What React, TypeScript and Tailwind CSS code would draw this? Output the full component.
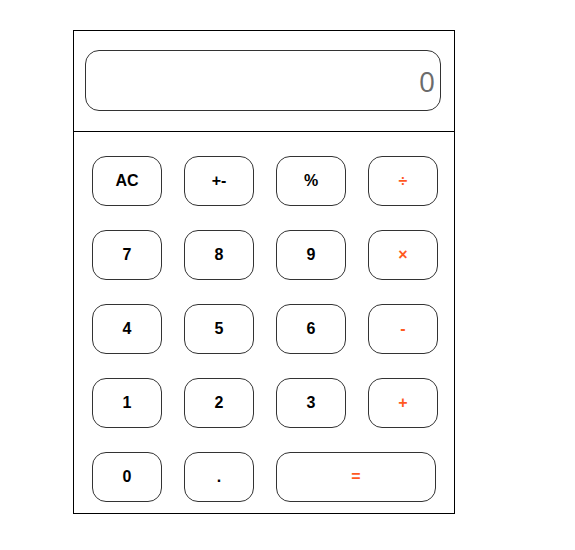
const keys: { label: string; op?: boolean; wide?: boolean }[] = [
  { label: "AC" },
  { label: "+-" },
  { label: "%" },
  { label: "÷", op: true },
  { label: "7" },
  { label: "8" },
  { label: "9" },
  { label: "×", op: true },
  { label: "4" },
  { label: "5" },
  { label: "6" },
  { label: "-", op: true },
  { label: "1" },
  { label: "2" },
  { label: "3" },
  { label: "+", op: true },
  { label: "0" },
  { label: "." },
  { label: "=", op: true, wide: true },
];

export default function App() {
  return (
    <div className="min-h-[550px] bg-white pt-[30px] pl-[73px] font-['Liberation_Sans',Arial,sans-serif]">
      <div className="w-[382px] border border-black">
        <div className="h-[101px] border-b border-black pt-[19px] pl-[11px]">
          <div className="flex h-[61px] w-[356px] items-center justify-end rounded-[14px] border border-[#333] pr-[5px] font-['Open_Sans',sans-serif] text-[28px] text-[#6b6b6b]">
            0
          </div>
        </div>
        <div className="grid grid-cols-[repeat(4,70px)] auto-rows-[50px] gap-x-[22px] gap-y-[24px] pt-[24px] pb-[11px] pl-[18px]">
          {keys.map((k) => (
            <button
              key={k.label}
              className={
                "rounded-[14px] border border-[#333] bg-white text-[16px] font-bold " +
                (k.op ? "text-[#ff5a1f] " : "text-black ") +
                (k.wide ? "col-span-2 w-[160px]" : "w-[70px]")
              }
            >
              {k.label}
            </button>
          ))}
        </div>
      </div>
    </div>
  );
}
